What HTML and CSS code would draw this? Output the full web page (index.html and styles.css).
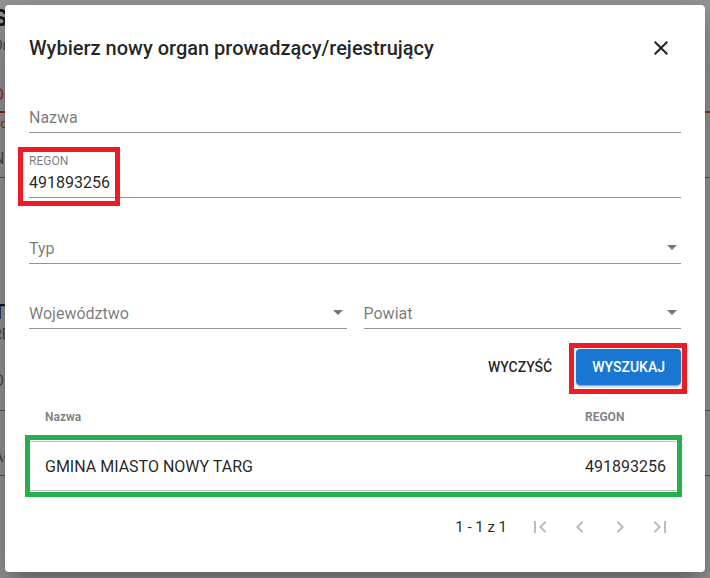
FILE: index.html
```html
<!DOCTYPE html>
<html lang="pl">
<head>
    <meta charset="UTF-8">
    <title>Organ prowadzący</title>
    <link rel="stylesheet" href="styles.css">
</head>
<body>
<div class="page">
    <h1 class="page-title">Szkoła</h1>
    <div class="page-sub">Organ</div>
    <div class="bg-field invalid"><span class="bg-value">Organ</span></div>
    <div class="bg-error">Pole</div>
    <div class="bg-field gray"><span class="bg-value">Nazwa</span></div>
    <h2 class="page-head">Typ</h2>
    <div class="page-small">REGON</div>
    <div class="bg-field gray tall"><span class="bg-value">Organ</span></div>
    <div class="bg-field gray"><span class="bg-value">Adres</span></div>
</div>

<div class="backdrop"></div>

<div class="dialog">
    <div class="dialog-head">
        <h2 class="dialog-title">Wybierz nowy organ prowadzący/rejestrujący</h2>
        <button class="icon-btn close-btn">
            <svg width="24" height="24" viewBox="0 0 24 24"><path d="M19 6.41L17.59 5 12 10.59 6.41 5 5 6.41 10.59 12 5 17.59 6.41 19 12 13.41 17.59 19 19 17.59 13.41 12z"/></svg>
        </button>
    </div>

    <div class="field">
        <span class="placeholder">Nazwa</span>
    </div>
    <div class="field">
        <span class="float-label">REGON</span>
        <span class="value">491893256</span>
    </div>
    <div class="field field-tall">
        <div class="select-line">
            <span class="placeholder">Typ</span>
            <span class="arrow"></span>
        </div>
    </div>
    <div class="field-row">
        <div class="field">
            <div class="select-line">
                <span class="placeholder">Województwo</span>
                <span class="arrow"></span>
            </div>
        </div>
        <div class="field">
            <div class="select-line">
                <span class="placeholder">Powiat</span>
                <span class="arrow"></span>
            </div>
        </div>
    </div>

    <div class="actions">
        <button class="btn">Wyczyść</button>
        <button class="btn btn-primary">Wyszukaj</button>
    </div>

    <div class="table">
        <div class="tr thead">
            <span class="col-name">Nazwa</span>
            <span class="col-regon">REGON</span>
        </div>
        <div class="tr">
            <span class="col-name">GMINA MIASTO NOWY TARG</span>
            <span class="col-regon">491893256</span>
        </div>
    </div>

    <div class="paginator">
        <span class="range">1 - 1 z 1</span>
        <button class="icon-btn pg-btn"><svg width="24" height="24" viewBox="0 0 24 24"><path d="M18.41 16.59L13.82 12l4.59-4.59L17 6l-6 6 6 6zM6 6h2v12H6z"/></svg></button>
        <button class="icon-btn pg-btn"><svg width="24" height="24" viewBox="0 0 24 24"><path d="M15.41 7.41L14 6l-6 6 6 6 1.41-1.41L10.83 12z"/></svg></button>
        <button class="icon-btn pg-btn"><svg width="24" height="24" viewBox="0 0 24 24"><path d="M10 6L8.59 7.41 13.17 12l-4.58 4.59L10 18l6-6z"/></svg></button>
        <button class="icon-btn pg-btn"><svg width="24" height="24" viewBox="0 0 24 24"><path d="M5.59 7.41L10.18 12l-4.59 4.59L7 18l6-6-6-6zM16 6h2v12h-2z"/></svg></button>
    </div>
</div>

<!-- zaznaczenia -->
<div class="mark mark-regon"></div>
<div class="mark mark-search"></div>
<div class="mark mark-result"></div>
</body>
</html>
```

FILE: styles.css
```css
* {
    margin: 0;
    padding: 0;
    box-sizing: border-box;
}
html, body {
    width: 100%;
    height: 100%;
}
body {
    position: relative;
    overflow: hidden;
    background-color: #fafafa;
    font-family: Roboto, "Noto Sans", "Liberation Sans", sans-serif;
    color: rgba(0, 0, 0, .87);
}

/* strona pod spodem */
.page {
    margin-left: -7px;
    padding-top: 2px;
}
.page-title {
    font-size: 24px;
    font-weight: 700;
    line-height: 33px;
}
.page-sub {
    font-size: 14px;
    line-height: 20px;
    color: rgba(0, 0, 0, .6);
}
.bg-field {
    display: flex;
    align-items: flex-end;
    height: 58px;
    padding-bottom: 6px;
    border-bottom: 2px solid #f44336;
    font-size: 16px;
    line-height: 20px;
}
.invalid .bg-value {
    color: #f44336;
}
.bg-field.gray {
    height: 47px;
    padding-bottom: 8px;
    border-bottom: 1px solid rgba(0, 0, 0, .42);
    color: rgba(0, 0, 0, .54);
}
.bg-field.tall {
    height: 67px;
    padding-bottom: 19px;
}
.bg-field.gray:last-child {
    height: 65px;
}
.bg-error {
    margin-top: 4px;
    font-size: 12px;
    line-height: 14px;
    color: #f44336;
}
.page-head {
    margin-top: 122px;
    font-size: 20px;
    font-weight: 700;
    line-height: 24px;
}
.page-small {
    font-size: 14px;
    line-height: 20px;
    color: rgba(0, 0, 0, .6);
}

.backdrop {
    position: absolute;
    left: 0;
    top: 0;
    right: 0;
    bottom: 0;
    background-color: rgba(0, 0, 0, .4);
}

/* okno dialogowe */
.dialog {
    position: absolute;
    left: 5px;
    top: 5px;
    width: 700px;
    height: 567px;
    padding: 23px 24px 0;
    background-color: #fff;
    border-radius: 4px;
    box-shadow: 0 11px 15px -7px rgba(0, 0, 0, .2), 0 24px 38px 3px rgba(0, 0, 0, .14), 0 9px 46px 8px rgba(0, 0, 0, .12);
}
.dialog-head {
    display: flex;
    align-items: center;
    justify-content: space-between;
    height: 40px;
}
.dialog-title {
    font-size: 20px;
    font-weight: 500;
    line-height: 32px;
    color: rgba(0, 0, 0, .87);
}
.icon-btn {
    display: flex;
    align-items: center;
    justify-content: center;
    width: 40px;
    height: 40px;
    border: 0;
    background: none;
    cursor: pointer;
}
.close-btn svg {
    fill: rgba(0, 0, 0, .87);
}

.field {
    display: flex;
    flex-direction: column;
    justify-content: flex-end;
    height: 65px;
    padding-bottom: 4px;
    border-bottom: 1px solid rgba(0, 0, 0, .42);
}
.field-tall {
    height: 66px;
}
.placeholder {
    font-size: 16px;
    line-height: 20px;
    color: rgba(0, 0, 0, .54);
}
.float-label {
    margin-bottom: 5px;
    font-size: 12px;
    line-height: 14px;
    color: rgba(0, 0, 0, .54);
}
.value {
    font-size: 16px;
    line-height: 20px;
    color: rgba(0, 0, 0, .87);
}
.select-line {
    display: flex;
    align-items: center;
    justify-content: space-between;
}
.arrow {
    width: 0;
    height: 0;
    margin-right: 4px;
    margin-bottom: 4px;
    border-left: 5px solid transparent;
    border-right: 5px solid transparent;
    border-top: 5px solid rgba(0, 0, 0, .54);
}
.field-row {
    display: flex;
    gap: 17px;
}
.field-row .field {
    flex: 1;
}

.actions {
    display: flex;
    justify-content: flex-end;
    gap: 8px;
    margin-top: 20px;
}
.btn {
    height: 36px;
    padding: 0 16px;
    border: 0;
    border-radius: 4px;
    background: none;
    font-family: inherit;
    font-size: 14px;
    font-weight: 500;
    line-height: 36px;
    text-transform: uppercase;
    color: rgba(0, 0, 0, .87);
    cursor: pointer;
}
.btn-primary {
    background-color: #1976d2;
    color: #fff;
    box-shadow: 0 3px 1px -2px rgba(0, 0, 0, .2), 0 2px 2px 0 rgba(0, 0, 0, .14), 0 1px 5px 0 rgba(0, 0, 0, .12);
}

.table {
    margin-top: 8px;
}
.tr {
    display: flex;
    align-items: center;
    height: 49px;
    padding: 0 16px;
    border-bottom: 1px solid #c6c6c6;
    font-size: 16px;
}
.thead {
    font-size: 12px;
    font-weight: 700;
    color: rgba(0, 0, 0, .5);
}
.col-name {
    flex: 1;
}
.col-regon {
    width: 80px;
    white-space: nowrap;
}

.paginator {
    display: flex;
    align-items: center;
    justify-content: flex-end;
    height: 56px;
    margin-top: 8px;
    padding-right: 1px;
}
.range {
    margin-right: 13px;
    font-size: 15px;
    color: rgba(0, 0, 0, .87);
}
.pg-btn svg {
    fill: rgba(0, 0, 0, .26);
}

/* zaznaczenia na zrzucie */
.mark {
    position: absolute;
    border: 5px solid #ed1c24;
}
.mark-regon {
    left: 18px;
    top: 147px;
    width: 102px;
    height: 59px;
}
.mark-search {
    left: 569px;
    top: 343px;
    width: 118px;
    height: 51px;
}
.mark-result {
    left: 25px;
    top: 435px;
    width: 657px;
    height: 62px;
    border-color: #22b14c;
}
```
